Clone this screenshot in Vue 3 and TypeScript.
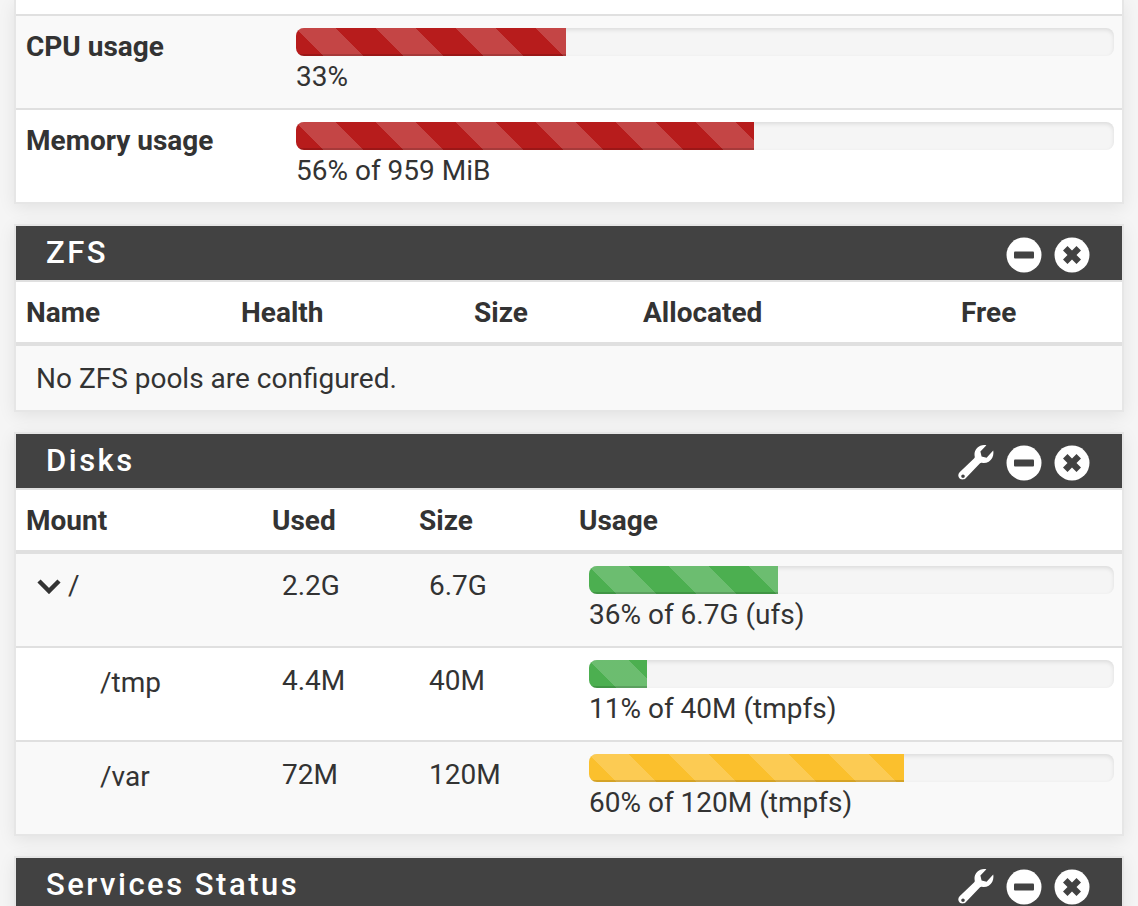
<script setup lang="ts">
interface Usage {
  pct: number
  level: 'danger' | 'success' | 'warning'
  text: string
}

const system: { label: string; usage: Usage }[] = [
  { label: 'CPU usage', usage: { pct: 33, level: 'danger', text: '33%' } },
  { label: 'Memory usage', usage: { pct: 56, level: 'danger', text: '56% of 959 MiB' } },
]

const disks: { mount: string; sub: boolean; used: string; size: string; usage: Usage }[] = [
  { mount: '/', sub: false, used: '2.2G', size: '6.7G', usage: { pct: 36, level: 'success', text: '36% of 6.7G (ufs)' } },
  { mount: '/tmp', sub: true, used: '4.4M', size: '40M', usage: { pct: 11, level: 'success', text: '11% of 40M (tmpfs)' } },
  { mount: '/var', sub: true, used: '72M', size: '120M', usage: { pct: 60, level: 'warning', text: '60% of 120M (tmpfs)' } },
]

const wrench = 'M35.2 5.4c.5 2.6 .2 5.2-1 7.5-1.9 3.7-6.1 5.7-10.2 4.9-1-.2-1.5 0-2.2 .7L8.4 32.4c-.8 .9-1.7 1.7-2.9 1.9-2 .4-3.8-.4-4.7-2.1-.9-1.7-.6-3.6 .8-5L16 13.6c.7-.7 .9-1.2 .7-2.2-.9-4.4 1.5-8.9 5.6-10.6 2-.8 4-.9 6.1-.5L22.4 6.4l1.2 5 5 1.3zM5 29.4a1.8 1.8 0 1 0 0 3.6 1.8 1.8 0 1 0 0-3.6z'
const cross = 'M18 13.5l4.5-4.5 4.5 4.5-4.5 4.5 4.5 4.5-4.5 4.5-4.5-4.5-4.5 4.5-4.5-4.5 4.5-4.5-4.5-4.5 4.5-4.5z'
</script>

<template>
  <div class="page">
    <section class="panel">
      <div class="top-row"></div>
      <div v-for="(row, i) in system" :key="row.label" class="row sys-row" :class="{ odd: i % 2 === 0 }">
        <strong>{{ row.label }}</strong>
        <div>
          <div class="progress">
            <div class="bar" :class="row.usage.level" :style="{ width: row.usage.pct + '%' }"></div>
          </div>
          <div class="note">{{ row.usage.text }}</div>
        </div>
      </div>
    </section>

    <section class="panel">
      <header class="heading">
        <h2>ZFS</h2>
        <div class="actions">
          <svg class="ico" viewBox="0 0 36 36"><circle cx="18" cy="18" r="17.5" fill="#fff" /><rect x="8" y="14.5" width="20" height="7" rx="1" fill="#424242" /></svg>
          <svg class="ico" viewBox="0 0 36 36"><circle cx="18" cy="18" r="17.5" fill="#fff" /><path :d="cross" fill="#424242" /></svg>
        </div>
      </header>
      <div class="row head zfs-row">
        <strong>Name</strong><strong>Health</strong><strong>Size</strong><strong>Allocated</strong><strong>Free</strong>
      </div>
      <div class="zfs-empty odd">No ZFS pools are configured.</div>
    </section>

    <section class="panel">
      <header class="heading">
        <h2>Disks</h2>
        <div class="actions">
          <svg class="ico" viewBox="0 0 36 36"><path :d="wrench" fill="#fff" fill-rule="evenodd" /></svg>
          <svg class="ico" viewBox="0 0 36 36"><circle cx="18" cy="18" r="17.5" fill="#fff" /><rect x="8" y="14.5" width="20" height="7" rx="1" fill="#424242" /></svg>
          <svg class="ico" viewBox="0 0 36 36"><circle cx="18" cy="18" r="17.5" fill="#fff" /><path :d="cross" fill="#424242" /></svg>
        </div>
      </header>
      <div class="row head disk-row">
        <strong>Mount</strong><strong>Used</strong><strong>Size</strong><strong>Usage</strong>
      </div>
      <div v-for="(d, i) in disks" :key="d.mount" class="row disk-row disk-body" :class="{ odd: i % 2 === 0 }">
        <div class="mount" :class="{ sub: d.sub }">
          <svg v-if="!d.sub" class="chev" viewBox="0 0 26 16"><path d="M3 3l10 10 10-10" fill="none" stroke="#333" stroke-width="4.5" /></svg>
          <span>{{ d.mount }}</span>
        </div>
        <div class="cell">{{ d.used }}</div>
        <div class="cell">{{ d.size }}</div>
        <div class="usage">
          <div class="progress">
            <div class="bar" :class="d.usage.level" :style="{ width: d.usage.pct + '%' }"></div>
          </div>
          <div class="note">{{ d.usage.text }}</div>
        </div>
      </div>
    </section>

    <section class="panel">
      <header class="heading">
        <h2>Services Status</h2>
        <div class="actions">
          <svg class="ico" viewBox="0 0 36 36"><path :d="wrench" fill="#fff" fill-rule="evenodd" /></svg>
          <svg class="ico" viewBox="0 0 36 36"><circle cx="18" cy="18" r="17.5" fill="#fff" /><rect x="8" y="14.5" width="20" height="7" rx="1" fill="#424242" /></svg>
          <svg class="ico" viewBox="0 0 36 36"><circle cx="18" cy="18" r="17.5" fill="#fff" /><path :d="cross" fill="#424242" /></svg>
        </div>
      </header>
    </section>
  </div>
</template>

<style>
html,
body {
  background: #f5f5f5;
  overflow: hidden;
}
</style>

<style scoped>
.page {
  height: 906px;
  overflow: hidden;
  padding: 0 14px;
  display: flex;
  flex-direction: column;
  gap: 20px;
  box-sizing: border-box;
  font-family: Roboto, "Liberation Sans", sans-serif;
  font-size: 28px;
  line-height: 40px;
  color: #333;
}

.panel {
  flex: none;
  border: 2px solid #e6e6e6;
  background: #fff;
  box-shadow: 0 4px 16px rgba(0, 0, 0, 0.08);
}

.panel:first-child {
  border-top: 0;
}

.top-row {
  height: 14px;
}

.heading {
  box-sizing: border-box;
  height: 54px;
  padding: 3px 32px 0 30px;
  background: #424242;
  color: #fff;
  display: flex;
  align-items: center;
  justify-content: space-between;
}

h2 {
  margin: 0 0 3px;
  font-size: 31px;
  font-weight: 500;
  letter-spacing: 2.5px;
}

.actions {
  display: flex;
  align-items: center;
  gap: 12px;
}

.ico {
  width: 36px;
  height: 36px;
  display: block;
}

.row {
  display: grid;
  box-sizing: border-box;
  padding: 0 8px 0 10px;
  border-top: 2px solid #e0e0e0;
}

.odd {
  background: #f9f9f9;
}

strong {
  font-weight: 700;
  line-height: 42px;
}

.sys-row {
  grid-template-columns: 270px 1fr;
  height: 94px;
  padding-top: 10px;
}

.progress {
  height: 28px;
  margin-top: 2px;
  border-radius: 8px;
  background: #f5f5f5;
  box-shadow: inset 0 2px 4px rgba(0, 0, 0, 0.1);
  overflow: hidden;
}

.bar {
  height: 100%;
  box-shadow: inset 0 -2px 0 rgba(0, 0, 0, 0.15);
  background-image: linear-gradient(
    to top right,
    rgba(255, 255, 255, 0.18) 25%,
    transparent 25%,
    transparent 50%,
    rgba(255, 255, 255, 0.18) 50%,
    rgba(255, 255, 255, 0.18) 75%,
    transparent 75%,
    transparent
  );
  background-size: 80px 80px;
}

.danger {
  background-color: #b71c1c;
}

.success {
  background-color: #4caf50;
}

.warning {
  background-color: #fbc02d;
}

.note {
  line-height: 42px;
}

.head {
  height: 66px;
  padding-top: 2px;
  align-items: center;
  border-bottom: 4px solid #e0e0e0;
}

.zfs-row {
  grid-template-columns: 215px 233px 169px 318px 1fr;
}

.zfs-empty {
  box-sizing: border-box;
  height: 64px;
  padding: 2px 0 0 20px;
  display: flex;
  align-items: center;
}

.disk-row {
  grid-template-columns: 246px 147px 160px 1fr;
}

.disk-body {
  height: 94px;
  padding-top: 10px;
}

.head + .disk-body {
  border-top: 0;
  height: 92px;
}

.cell {
  padding: 2px 0 0 10px;
}

.disk-body + .disk-body .cell {
  padding-top: 3px;
}

.usage {
  padding-left: 10px;
}

.mount {
  display: flex;
  align-items: flex-start;
  gap: 6px;
  padding: 2px 0 0 10px;
}

.mount.sub {
  padding: 5px 0 0 74px;
}

.chev {
  width: 26px;
  height: 16px;
  margin-top: 12px;
  flex: none;
}
</style>
